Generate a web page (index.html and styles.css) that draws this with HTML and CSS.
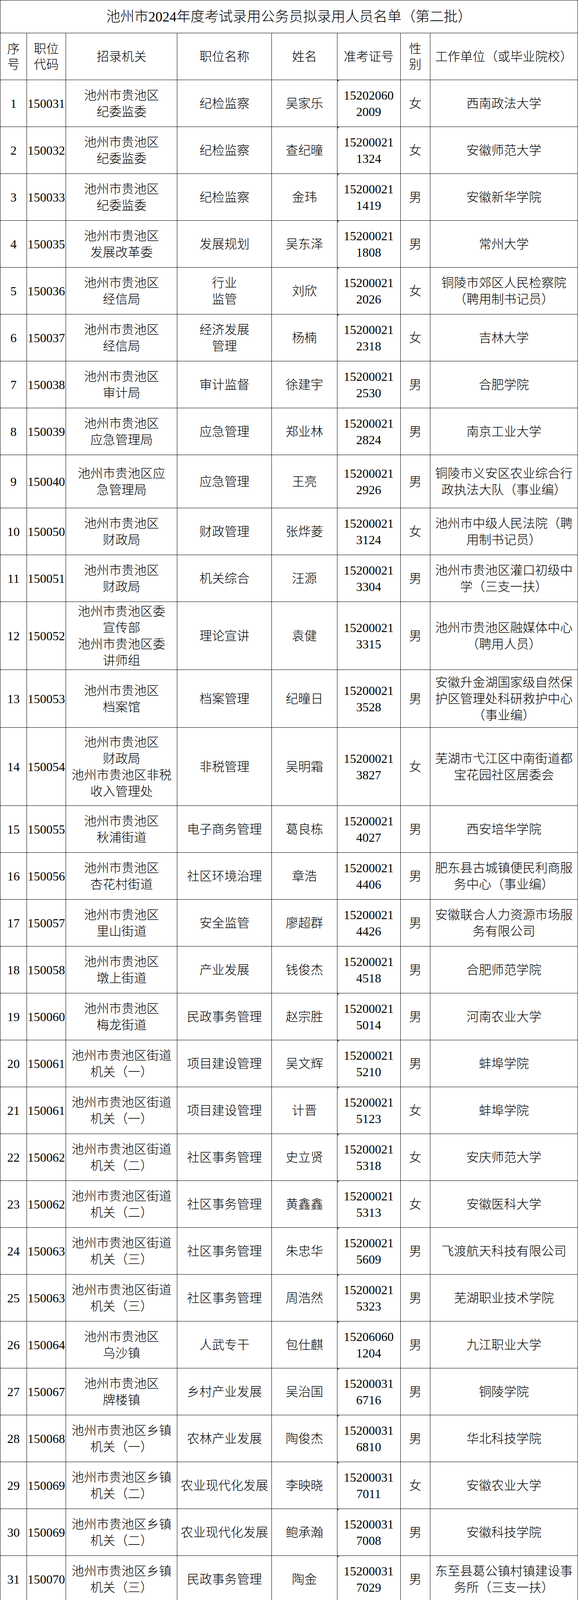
FILE: index.html
```html
<!DOCTYPE html>
<html lang="zh-CN">
<head>
<meta charset="utf-8">
<title>池州市2024年度考试录用公务员拟录用人员名单（第二批）</title>
<link rel="stylesheet" href="styles.css">
</head>
<body>
<table class="roster">
  <colgroup>
    <col class="c-no"><col class="c-code"><col class="c-org"><col class="c-post"><col class="c-name"><col class="c-ticket"><col class="c-sex"><col class="c-unit">
  </colgroup>
  <tbody>
    <tr class="r-title"><td colspan="8" class="title">池州市2024年度考试录用公务员拟录用人员名单（第二批）</td></tr>
    <tr class="r120 head"><td>序<br>号</td><td>职位<br>代码</td><td>招录机关</td><td>职位名称</td><td>姓名</td><td>准考证号</td><td>性<br>别</td><td>工作单位（或毕业院校）</td></tr>
    <tr class="r120"><td>1</td><td>150031</td><td>池州市贵池区<br>纪委监委</td><td>纪检监察</td><td>吴家乐</td><td class="tk mark">15202060<br>2009</td><td>女</td><td>西南政法大学</td></tr>
    <tr class="r120"><td>2</td><td>150032</td><td>池州市贵池区<br>纪委监委</td><td>纪检监察</td><td>查纪曈</td><td class="tk mark">15200021<br>1324</td><td>女</td><td>安徽师范大学</td></tr>
    <tr class="r120"><td>3</td><td>150033</td><td>池州市贵池区<br>纪委监委</td><td>纪检监察</td><td>金玮</td><td class="tk mark">15200021<br>1419</td><td>男</td><td>安徽新华学院</td></tr>
    <tr class="r120"><td>4</td><td>150035</td><td>池州市贵池区<br>发展改革委</td><td>发展规划</td><td>吴东泽</td><td class="tk mark">15200021<br>1808</td><td>男</td><td>常州大学</td></tr>
    <tr class="r120"><td>5</td><td>150036</td><td>池州市贵池区<br>经信局</td><td>行业<br>监管</td><td>刘欣</td><td class="tk mark">15200021<br>2026</td><td>女</td><td>铜陵市郊区人民检察院<br>（聘用制书记员）</td></tr>
    <tr class="r120"><td>6</td><td>150037</td><td>池州市贵池区<br>经信局</td><td>经济发展<br>管理</td><td>杨楠</td><td class="tk mark">15200021<br>2318</td><td>女</td><td>吉林大学</td></tr>
    <tr class="r120"><td>7</td><td>150038</td><td>池州市贵池区<br>审计局</td><td>审计监督</td><td>徐建宇</td><td class="tk">15200021<br>2530</td><td>男</td><td>合肥学院</td></tr>
    <tr class="r120"><td>8</td><td>150039</td><td>池州市贵池区<br>应急管理局</td><td>应急管理</td><td>郑业林</td><td class="tk">15200021<br>2824</td><td>男</td><td>南京工业大学</td></tr>
    <tr class="r136"><td>9</td><td>150040</td><td>池州市贵池区应<br>急管理局</td><td>应急管理</td><td>王亮</td><td class="tk">15200021<br>2926</td><td>男</td><td>铜陵市义安区农业综合行<br>政执法大队（事业编）</td></tr>
    <tr class="r120"><td>10</td><td>150050</td><td>池州市贵池区<br>财政局</td><td>财政管理</td><td>张烨菱</td><td class="tk">15200021<br>3124</td><td>女</td><td>池州市中级人民法院（聘<br>用制书记员）</td></tr>
    <tr class="r120"><td>11</td><td>150051</td><td>池州市贵池区<br>财政局</td><td>机关综合</td><td>汪源</td><td class="tk">15200021<br>3304</td><td>男</td><td>池州市贵池区灌口初级中<br>学（三支一扶）</td></tr>
    <tr class="r174"><td>12</td><td>150052</td><td>池州市贵池区委<br>宣传部<br>池州市贵池区委<br>讲师组</td><td>理论宣讲</td><td>袁健</td><td class="tk">15200021<br>3315</td><td>男</td><td>池州市贵池区融媒体中心<br>（聘用人员）</td></tr>
    <tr class="r148"><td>13</td><td>150053</td><td>池州市贵池区<br>档案馆</td><td>档案管理</td><td>纪曈日</td><td class="tk">15200021<br>3528</td><td>男</td><td>安徽升金湖国家级自然保<br>护区管理处科研救护中心<br>（事业编）</td></tr>
    <tr class="r200"><td>14</td><td>150054</td><td>池州市贵池区<br>财政局<br>池州市贵池区非税<br>收入管理处</td><td>非税管理</td><td>吴明霜</td><td class="tk">15200021<br>3827</td><td>女</td><td>芜湖市弋江区中南街道都<br>宝花园社区居委会</td></tr>
    <tr class="r120"><td>15</td><td>150055</td><td>池州市贵池区<br>秋浦街道</td><td>电子商务管理</td><td>葛良栋</td><td class="tk">15200021<br>4027</td><td>男</td><td>西安培华学院</td></tr>
    <tr class="r120"><td>16</td><td>150056</td><td>池州市贵池区<br>杏花村街道</td><td>社区环境治理</td><td>章浩</td><td class="tk">15200021<br>4406</td><td>男</td><td>肥东县古城镇便民利商服<br>务中心（事业编）</td></tr>
    <tr class="r120"><td>17</td><td>150057</td><td>池州市贵池区<br>里山街道</td><td>安全监管</td><td>廖超群</td><td class="tk">15200021<br>4426</td><td>男</td><td>安徽联合人力资源市场服<br>务有限公司</td></tr>
    <tr class="r120"><td>18</td><td>150058</td><td>池州市贵池区<br>墩上街道</td><td>产业发展</td><td>钱俊杰</td><td class="tk">15200021<br>4518</td><td>男</td><td>合肥师范学院</td></tr>
    <tr class="r120"><td>19</td><td>150060</td><td>池州市贵池区<br>梅龙街道</td><td>民政事务管理</td><td>赵宗胜</td><td class="tk mark">15200021<br>5014</td><td>男</td><td>河南农业大学</td></tr>
    <tr class="r120"><td>20</td><td>150061</td><td>池州市贵池区街道<br>机关（一）</td><td>项目建设管理</td><td>吴文辉</td><td class="tk mark">15200021<br>5210</td><td>男</td><td>蚌埠学院</td></tr>
    <tr class="r120"><td>21</td><td>150061</td><td>池州市贵池区街道<br>机关（一）</td><td>项目建设管理</td><td>计晋</td><td class="tk mark">15200021<br>5123</td><td>女</td><td>蚌埠学院</td></tr>
    <tr class="r120"><td>22</td><td>150062</td><td>池州市贵池区街道<br>机关（二）</td><td>社区事务管理</td><td>史立贤</td><td class="tk mark">15200021<br>5318</td><td>女</td><td>安庆师范大学</td></tr>
    <tr class="r120"><td>23</td><td>150062</td><td>池州市贵池区街道<br>机关（二）</td><td>社区事务管理</td><td>黄鑫鑫</td><td class="tk mark">15200021<br>5313</td><td>女</td><td>安徽医科大学</td></tr>
    <tr class="r120"><td>24</td><td>150063</td><td>池州市贵池区街道<br>机关（三）</td><td>社区事务管理</td><td>朱忠华</td><td class="tk mark">15200021<br>5609</td><td>男</td><td>飞渡航天科技有限公司</td></tr>
    <tr class="r120"><td>25</td><td>150063</td><td>池州市贵池区街道<br>机关（三）</td><td>社区事务管理</td><td>周浩然</td><td class="tk mark">15200021<br>5323</td><td>男</td><td>芜湖职业技术学院</td></tr>
    <tr class="r120"><td>26</td><td>150064</td><td>池州市贵池区<br>乌沙镇</td><td>人武专干</td><td>包仕麒</td><td class="tk mark">15206060<br>1204</td><td>男</td><td>九江职业大学</td></tr>
    <tr class="r120"><td>27</td><td>150067</td><td>池州市贵池区<br>牌楼镇</td><td>乡村产业发展</td><td>吴治国</td><td class="tk mark">15200031<br>6716</td><td>男</td><td>铜陵学院</td></tr>
    <tr class="r120"><td>28</td><td>150068</td><td>池州市贵池区乡镇<br>机关（一）</td><td>农林产业发展</td><td>陶俊杰</td><td class="tk mark">15200031<br>6810</td><td>男</td><td>华北科技学院</td></tr>
    <tr class="r120"><td>29</td><td>150069</td><td>池州市贵池区乡镇<br>机关（二）</td><td>农业现代化发展</td><td>李映晓</td><td class="tk mark">15200031<br>7011</td><td>女</td><td>安徽农业大学</td></tr>
    <tr class="r120"><td>30</td><td>150069</td><td>池州市贵池区乡镇<br>机关（二）</td><td>农业现代化发展</td><td>鲍承瀚</td><td class="tk mark">15200031<br>7008</td><td>男</td><td>安徽科技学院</td></tr>
    <tr class="r120"><td>31</td><td>150070</td><td>池州市贵池区乡镇<br>机关（三）</td><td>民政事务管理</td><td>陶金</td><td class="tk mark">15200031<br>7029</td><td>男</td><td>东至县葛公镇村镇建设事<br>务所（三支一扶）</td></tr>
    <tr class="r146"><td>32</td><td>150070</td><td>池州市贵池区乡镇<br>机关（三）</td><td>民政事务管理</td><td>杜啸</td><td class="tk mark">15200031<br>7026</td><td>男</td><td>池州市贵池区秋江街道就<br>业和社会保障事务所（三<br>支一扶）</td></tr>
    <tr class="r120"><td>33</td><td>150071</td><td>池州市贵池区乡镇<br>机关（四）</td><td>乡镇事务管理</td><td>胡黄志</td><td class="tk">15200031<br>7801</td><td>男</td><td>安徽林业职业技术学院</td></tr>
    <tr class="r120"><td>34</td><td>150071</td><td>池州市贵池区乡镇<br>机关（四）</td><td>乡镇事务管理</td><td>杨鹏</td><td class="tk">15200031<br>7821</td><td>男</td><td>江西信息应用<br>职业技术学院</td></tr>
    <tr class="r120"><td>35</td><td>150072</td><td>池州市贵池区财政<br>局唐田分局</td><td>财政管理</td><td>张晨</td><td class="tk">15200031<br>8126</td><td>女</td><td>马鞍山师范高等<br>专科学校</td></tr>
    <tr class="r120"><td>36</td><td>150073</td><td>池州市贵池区镇街<br>财政分局（一）</td><td>财政管理</td><td>王诗涵</td><td class="tk">15200031<br>8408</td><td>女</td><td>合肥学院</td></tr>
    <tr class="r120"><td>37</td><td>150073</td><td>池州市贵池区镇街<br>财政分局（一）</td><td>财政管理</td><td>高雅</td><td class="tk mark">15200031<br>8302</td><td>女</td><td>池州高新建设发展<br>有限公司</td></tr>
    <tr class="r120"><td>38</td><td>150073</td><td>池州市贵池区镇街<br>财政分局（一）</td><td>财政管理</td><td>何飞洋</td><td class="tk mark">15200031<br>8229</td><td>男</td><td>安徽农业大学</td></tr>
    <tr class="r120"><td>39</td><td>150073</td><td>池州市贵池区镇街<br>财政分局（一）</td><td>财政管理</td><td>朱溯源</td><td class="tk mark">15200031<br>8917</td><td>男</td><td>安徽财经大学</td></tr>
    <tr class="r120"><td>40</td><td>150074</td><td>池州市贵池区镇街<br>财政分局（二）</td><td>财政管理</td><td>汪淑婷</td><td class="tk mark">15200031<br>9223</td><td>女</td><td>河北大学</td></tr>
    <tr class="r120"><td>41</td><td>150074</td><td>池州市贵池区镇街<br>财政分局（二）</td><td>财政管理</td><td>岳天宝</td><td class="tk mark">15200031<br>9618</td><td>男</td><td>青海大学</td></tr>
    <tr class="r120"><td>42</td><td>150074</td><td>池州市贵池区镇街<br>财政分局（二）</td><td>财政管理</td><td>王诗伟</td><td class="tk mark">15200031<br>9518</td><td>女</td><td>华侨大学</td></tr>
    <tr class="r120"><td>43</td><td>150074</td><td>池州市贵池区镇街<br>财政分局（二）</td><td>财政管理</td><td>柯曼</td><td class="tk mark">15200031<br>9509</td><td>女</td><td>铜陵学院</td></tr>
    <tr class="r120"><td>44</td><td>150075</td><td>东至县纪委监委派<br>驻纪检监察机构</td><td>纪检监察</td><td>李旭</td><td class="tk mark">15200031<br>9622</td><td>男</td><td>湖北省孝昌县小河镇财政<br>所（事业编）</td></tr>
    <tr class="r120"><td>45</td><td>150079</td><td>东至县政府办公室</td><td>综合文字</td><td>潘延艳</td><td class="tk mark">15200032<br>0215</td><td>女</td><td>阜阳师范大学</td></tr>
    <tr class="r120"><td>46</td><td>150080</td><td>东至县政府办公室</td><td>督查督办</td><td>张源</td><td class="tk">15200032<br>0624</td><td>女</td><td>安徽农业大学</td></tr>
    <tr class="r120"><td>47</td><td>150080</td><td>东至县政府办公室</td><td>督查督办</td><td>宋瑞</td><td class="tk">15200032<br>0425</td><td>男</td><td>安庆菜子湖国家湿地公园<br>保护中心（事业编）</td></tr>
    <tr class="r120"><td>48</td><td>150082</td><td>东至县发展改革委</td><td>新兴产业研究</td><td>吴嘉祺</td><td class="tk">15200032<br>0805</td><td>男</td><td>安徽工程大学</td></tr>
    <tr class="r120"><td>49</td><td>150083</td><td>东至县教体局</td><td>教育管理</td><td>朱荣耀</td><td class="tk">15200042<br>1102</td><td>女</td><td>蚌埠学院</td></tr>
  </tbody>
</table>
</body>
</html>
```
FILE: styles.css
```css
html, body {
  margin: 0;
  padding: 0;
  background: #ffffff;
}

.roster {
  border-collapse: collapse;
  table-layout: fixed;
  width: 1480px;
  font-family: "Liberation Serif", "Noto Sans CJK SC", serif;
  font-size: 32px;
  font-weight: 300;
  line-height: 42px;
  color: #000000;
}

.c-no { width: 68px; }
.c-code { width: 100px; }
.c-org { width: 285px; }
.c-post { width: 242px; }
.c-name { width: 167px; }
.c-ticket { width: 162px; }
.c-sex { width: 76px; }
.c-unit { width: 378px; }

.roster td {
  border: 1px solid #000000;
  padding: 0;
  text-align: center;
  vertical-align: middle;
  white-space: nowrap;
  overflow: hidden;
}

.r-title { height: 84px; }
.r120 { height: 120px; }
.r136 { height: 136px; }
.r146 { height: 146px; }
.r148 { height: 148px; }
.r174 { height: 174px; }
.r200 { height: 200px; }

.roster td.title {
  font-size: 36px;
  line-height: 44px;
}

.head td {
  line-height: 40px;
}

.roster td.tk {
  position: relative;
}

.roster td.mark::before {
  content: "";
  position: absolute;
  top: 0;
  left: 0;
  width: 0;
  height: 0;
  border-top: 5px solid #0b8a0b;
  border-right: 5px solid transparent;
}
```
